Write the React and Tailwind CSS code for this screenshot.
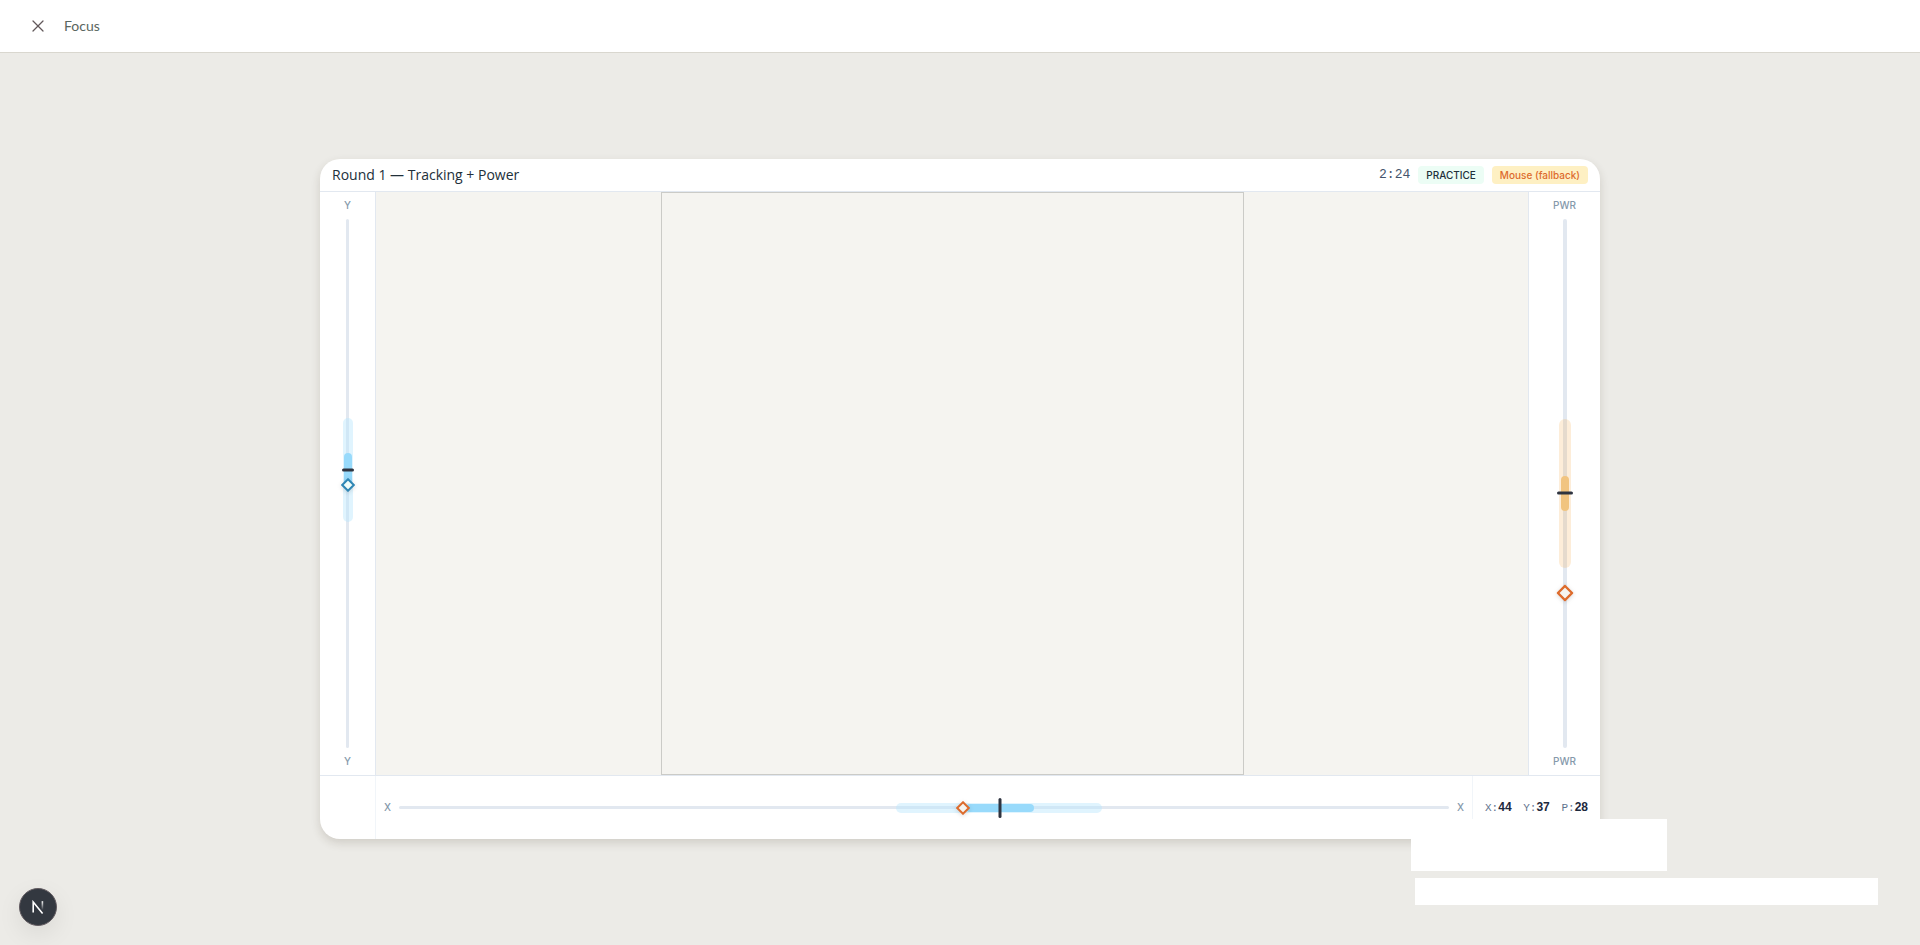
import { X } from "lucide-react";
import clsx from "clsx";

const percent = (value) => `${value}%`;

const AxisLabel = ({ children }) => (
  <span className="text-[10px] leading-[11px] font-medium text-[#8599ab]">
    {children}
  </span>
);

const Diamond = ({ color, fill, size }) => (
  <svg
    viewBox="0 0 16 16"
    width={size}
    height={size}
    aria-hidden="true"
    className="drop-shadow-sm"
  >
    <path d="M8 1.4 14.6 8 8 14.6 1.4 8Z" fill={fill} stroke={color} strokeWidth="2.2" />
  </svg>
);

const VerticalGauge = ({ label, name, value, outer, inner, target, marker, tone }) => {
  const power = tone === "power";

  return (
    <div
      className={clsx(
        "flex shrink-0 flex-col items-center gap-2 border-slate-200 bg-white py-2",
        power ? "w-18 border-l" : "w-14 border-r"
      )}
    >
      <AxisLabel>{label}</AxisLabel>
      <div
        role="meter"
        aria-label={name}
        aria-valuemin={0}
        aria-valuemax={100}
        aria-valuenow={value}
        className={clsx(
          "relative flex-1 rounded-full bg-slate-200",
          power ? "w-1" : "w-[3px]"
        )}
      >
        <div
          className={clsx(
            "absolute left-1/2 -translate-x-1/2 rounded-full",
            power ? "w-3 bg-[#f6a63f]/20" : "w-[10px] bg-[#bae6fd]/45"
          )}
          style={{ top: percent(outer[0]), height: percent(outer[1]) }}
        />
        <div
          className={clsx(
            "absolute left-1/2 w-2 -translate-x-1/2 rounded-full",
            power ? "bg-[#f1c480]" : "bg-[#98dafb]"
          )}
          style={{ top: percent(inner[0]), height: percent(inner[1]) }}
        />
        <div
          className={clsx(
            "absolute left-1/2 h-[3px] -translate-x-1/2 -translate-y-1/2 rounded-full bg-[#2f3440]",
            power ? "w-4" : "w-3"
          )}
          style={{ top: percent(target) }}
        />
        <div
          className="absolute left-1/2 -translate-x-1/2 -translate-y-1/2"
          style={{ top: percent(marker) }}
        >
          <Diamond
            color={power ? "#dd6b2c" : "#2f86b4"}
            fill={power ? "#f5f4f0" : "#f0fdfa"}
            size={power ? 17 : 14}
          />
        </div>
      </div>
      <AxisLabel>{label}</AxisLabel>
    </div>
  );
};

const HorizontalGauge = () => (
  <div className="flex flex-1 items-center gap-2 px-2">
    <AxisLabel>X</AxisLabel>
    <div
      role="meter"
      aria-label="X axis"
      aria-valuemin={0}
      aria-valuemax={100}
      aria-valuenow={44}
      className="relative h-[3px] flex-1 rounded-full bg-slate-200"
    >
      <div
        className="absolute top-1/2 h-[10px] -translate-y-1/2 rounded-full bg-[#bae6fd]/45"
        style={{ left: percent(47.3), width: percent(19.7) }}
      />
      <div
        className="absolute top-1/2 h-2 -translate-y-1/2 rounded-full bg-[#98dafb]"
        style={{ left: percent(54), width: percent(6.5) }}
      />
      <div
        className="absolute top-1/2 h-5 w-[3px] -translate-x-1/2 -translate-y-1/2 rounded-full bg-[#2f3440]"
        style={{ left: percent(57.25) }}
      />
      <div
        className="absolute top-1/2 -translate-x-1/2 -translate-y-1/2"
        style={{ left: percent(53.7) }}
      >
        <Diamond color="#dd6b2c" fill="#f5f4f0" size={14} />
      </div>
    </div>
    <AxisLabel>X</AxisLabel>
  </div>
);

const Readout = ({ axis, value }) => (
  <span className="font-['Liberation_Mono',monospace] text-[11px] text-slate-500">
    {axis}:
    <span className="font-['Liberation_Sans',sans-serif] text-xs font-bold text-slate-800">
      {value}
    </span>
  </span>
);

const GameCard = () => (
  <section className="flex h-170 w-full max-w-7xl flex-col overflow-hidden rounded-[20px] bg-white shadow-[0_4px_10px_rgba(60,50,30,0.16)]">
    <div className="flex h-[33px] shrink-0 items-center justify-between border-b border-slate-200 px-3">
      <h1 className="font-['Open_Sans',sans-serif] text-sm font-medium text-[#22303a]">
        Round 1 — Tracking + Power
      </h1>
      <div className="flex items-center gap-2">
        <span className="font-['Liberation_Mono',monospace] text-[13px] text-slate-600">
          2:24
        </span>
        <span className="rounded-sm bg-[#ecfdf5] px-2 text-[10px] leading-[18px] font-medium text-[#22303a]">
          PRACTICE
        </span>
        <span className="rounded-sm bg-[#fef0c3] px-2 text-[10px] leading-[18px] font-medium text-[#dd6b2c]">
          Mouse (fallback)
        </span>
      </div>
    </div>

    <div className="flex min-h-0 flex-1">
      <VerticalGauge
        label="Y"
        name="Y axis"
        value={37}
        outer={[37.6, 19.7]}
        inner={[44.2, 6.5]}
        target={47.4}
        marker={50.3}
      />
      <div className="flex flex-1 justify-center bg-[#f5f4f0]">
        <div className="aspect-square h-full border border-[#cbcbc7]" />
      </div>
      <VerticalGauge
        label="PWR"
        name="Power"
        value={28}
        outer={[37.8, 28.2]}
        inner={[48.6, 6.6]}
        target={51.8}
        marker={70.7}
        tone="power"
      />
    </div>

    <div className="flex h-16 shrink-0 border-t border-slate-200">
      <div className="w-14 border-r border-slate-100" />
      <HorizontalGauge />
      <div className="flex w-32 items-center justify-between border-l border-slate-100 px-3">
        <Readout axis="X" value={44} />
        <Readout axis="Y" value={37} />
        <Readout axis="P" value={28} />
      </div>
    </div>
  </section>
);

export default function App() {
  return (
    <div className="flex min-h-screen flex-col bg-[#ecebe7] font-[Inter,sans-serif]">
      <header className="flex h-[53px] items-center gap-3 border-b border-[#d9d7cf] bg-white px-6">
        <button
          type="button"
          aria-label="Close"
          className="flex size-7 items-center justify-center text-[#62585a]"
        >
          <X size={20} strokeWidth={1.5} />
        </button>
        <span className="font-[Lato,sans-serif] text-sm text-[#596660]">
          Focus
        </span>
      </header>

      <main className="flex flex-1 items-center justify-center">
        <GameCard />
      </main>

      <div className="fixed right-[253px] bottom-[74px] h-13 w-64 bg-white" />
      <div className="fixed right-[42px] bottom-10 h-[27px] w-[463px] bg-white" />

      <button
        type="button"
        aria-label="Open developer tools"
        className="fixed bottom-[19px] left-[19px] flex size-[38px] items-center justify-center rounded-full border border-[#625b60] bg-[#333840] shadow-[0_8px_24px_rgba(0,0,0,0.08)]"
      >
        <svg width="14" height="14" viewBox="0 0 14 14" fill="none" aria-hidden="true">
          <defs>
            <linearGradient id="stem" x1="0" y1="1" x2="0" y2="10" gradientUnits="userSpaceOnUse">
              <stop stopColor="#fff" />
              <stop offset="1" stopColor="#fff" stopOpacity="0" />
            </linearGradient>
          </defs>
          <path d="M2.2 12.5V2L11.6 13.4" stroke="#fff" strokeWidth="1.6" />
          <path d="M11.4 1.2V10" stroke="url(#stem)" strokeWidth="1.6" />
        </svg>
      </button>
    </div>
  );
}
